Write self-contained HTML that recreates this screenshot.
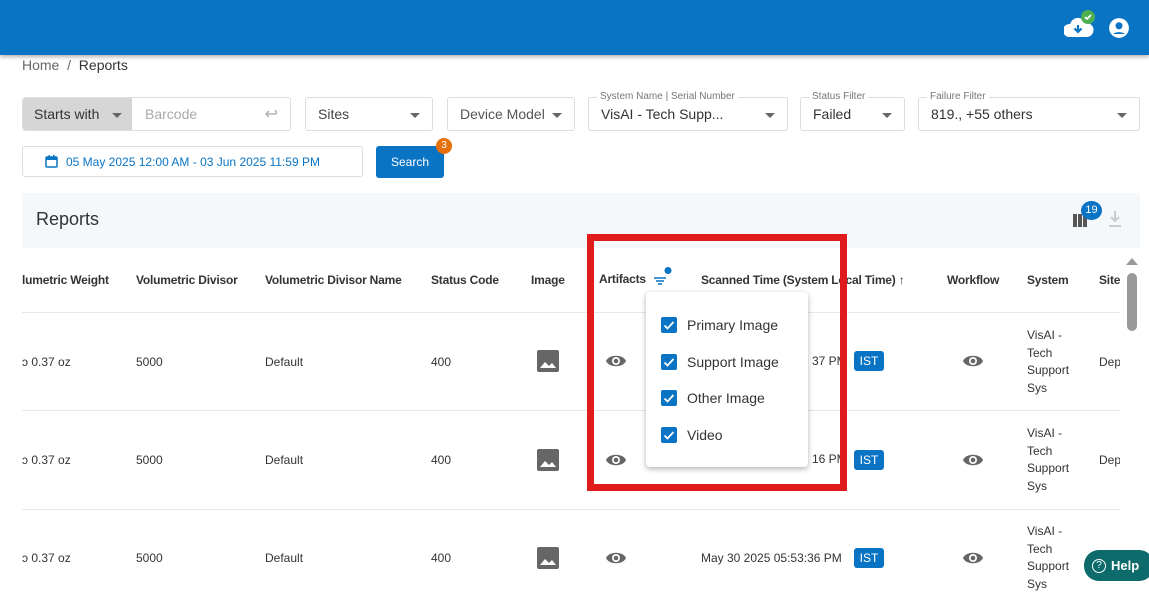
<!DOCTYPE html>
<html><head><meta charset="utf-8"><style>
*{box-sizing:border-box;margin:0;padding:0}
body{width:1149px;height:604px;overflow:hidden;background:#fff;font-family:"Liberation Sans",Arial,sans-serif;position:relative;color:#333}
.a{position:absolute}
.hdr{left:0;top:0;width:1149px;height:55px;background:#0a74c4;box-shadow:0 2px 4px rgba(0,0,0,.3)}
.box{position:absolute;border:1px solid #ddd;border-radius:3px;height:34px;background:#fff;font-size:14px;color:#444;display:flex;align-items:center;padding-left:12px}
.car{position:absolute;right:12px;top:15px;width:0;height:0;border-left:5px solid transparent;border-right:5px solid transparent;border-top:5px solid #666}
.lbl{position:absolute;top:-7px;left:8px;background:#fff;padding:0 3px;font-size:10px;color:#777;line-height:12px}
.th{position:absolute;top:273px;font-size:12px;font-weight:bold;color:#333;letter-spacing:-0.2px}
.td{position:absolute;font-size:12px;color:#333}
.sep{position:absolute;left:22px;width:1106px;height:1px;background:#e8e8e8}
.ist{position:absolute;width:30px;height:20px;background:#0a74c4;color:#fff;font-size:12px;border-radius:3px;text-align:center;line-height:20px}
.cb{position:absolute;left:661px;width:16px;height:16px;background:#0a74c4;border-radius:2px}
.cbt{position:absolute;left:687px;font-size:14px;color:#333}
</style></head><body>
<div class="a hdr"></div>
<svg class="a" style="left:1064px;top:9px" width="34" height="30" viewBox="0 0 34 30"><path d="M5 28a6.5 6.5 0 0 1 1-13a8.5 8.5 0 0 1 16-1a6.5 6.5 0 0 1 1 14z" fill="#fff"/><path d="M14 16v7m-3.5-3.5l3.5 3.5 3.5-3.5" stroke="#0a74c4" stroke-width="2.2" fill="none"/><circle cx="24" cy="8" r="7" fill="#4caf50"/><path d="M21 8l2 2 4-4" stroke="#fff" stroke-width="1.8" fill="none"/></svg>
<svg class="a" style="left:1108px;top:17px" width="22" height="22" viewBox="0 0 20 20"><circle cx="10" cy="10" r="9" fill="#fff"/><circle cx="10" cy="8" r="3.2" fill="#0a74c4"/><path d="M4.5 15.5a7 4.5 0 0 1 11 0" fill="#0a74c4"/></svg>
<div class="a" style="left:22px;top:57px;font-size:14px;color:#666">Home &nbsp;/ &nbsp;<span style="color:#333">Reports</span></div>

<div class="box" style="left:22px;top:97px;width:269px;padding:0"><div style="width:109px;height:100%;background:#d6d6d6;border-radius:3px 0 0 3px;display:flex;align-items:center;padding-left:11px;color:#333;position:relative">Starts with<div class="car" style="right:10px"></div></div><span style="color:#aaa;margin-left:13px">Barcode</span><span style="position:absolute;right:12px;color:#aaa;font-size:16px">↩</span></div>
<div class="box" style="left:305px;top:97px;width:128px">Sites<div class="car"></div></div>
<div class="box" style="left:447px;top:97px;width:128px;color:#555">Device Model<div class="car"></div></div>
<div class="box" style="left:588px;top:97px;width:200px;color:#333"><div class="lbl">System Name | Serial Number</div>VisAI - Tech Supp...<div class="car"></div></div>
<div class="box" style="left:800px;top:97px;width:105px;color:#333"><div class="lbl">Status Filter</div>Failed<div class="car"></div></div>
<div class="box" style="left:918px;top:97px;width:222px;color:#333"><div class="lbl">Failure Filter</div>819., +55 others<div class="car"></div></div>

<div class="box" style="left:22px;top:146px;width:341px;height:31px;font-size:12px;color:#0a74c4;padding-left:22px"><svg width="13" height="13" viewBox="0 0 13 13" style="margin-right:8px"><rect x="1" y="2" width="11" height="10" rx="1" fill="none" stroke="#0a74c4" stroke-width="1.5"/><rect x="1" y="2" width="11" height="3" fill="#0a74c4"/><rect x="3.5" y="0" width="1.5" height="3" fill="#0a74c4"/><rect x="8" y="0" width="1.5" height="3" fill="#0a74c4"/></svg>05 May 2025 12:00 AM - 03 Jun 2025 11:59 PM</div>
<div class="a" style="left:376px;top:146px;width:68px;height:32px;background:#0a74c4;border-radius:3px;color:#fff;font-size:12px;text-align:center;line-height:32px">Search</div>
<div class="a" style="left:436px;top:138px;width:16px;height:16px;border-radius:50%;background:#e8700a;color:#fff;font-size:10px;text-align:center;line-height:16px">3</div>

<div class="a" style="left:22px;top:193px;width:1118px;height:55px;background:#f5f8fb"></div>
<div class="a" style="left:36px;top:209px;font-size:18px;color:#333">Reports</div>
<svg class="a" style="left:1073px;top:211px" width="18" height="16"><rect x="0" y="3" width="4" height="13" fill="#555"/><rect x="5" y="3" width="4" height="13" fill="#555"/><rect x="10" y="3" width="4" height="13" fill="#555"/></svg>
<div class="a" style="left:1081px;top:201px;width:21px;height:19px;border-radius:50%;background:#0a74c4;color:#fff;font-size:11px;text-align:center;line-height:19px">19</div>
<svg class="a" style="left:1108px;top:210px" width="14" height="18"><path d="M7 1v10M3 7l4 4 4-4M1 16h12" stroke="#ccc" stroke-width="2" fill="none"/></svg>

<div class="th" style="left:22px">lumetric Weight</div>
<div class="th" style="left:136px">Volumetric Divisor</div>
<div class="th" style="left:265px">Volumetric Divisor Name</div>
<div class="th" style="left:431px">Status Code</div>
<div class="th" style="left:531px">Image</div>
<div class="th" style="left:599px;top:272px">Artifacts</div>
<svg class="a" style="left:652px;top:266px" width="22" height="20"><path d="M2 12h12M4 15h8M6 18h4" stroke="#0a74c4" stroke-width="1.5"/><circle cx="16" cy="4.5" r="3.5" fill="#0a74c4"/></svg>
<div class="th" style="left:701px">Scanned Time (System Local Time) <span style="font-weight:normal">↑</span></div>
<div class="th" style="left:947px">Workflow</div>
<div class="th" style="left:1027px">System</div>
<div class="th" style="left:1099px">Site</div>

<div class="sep" style="top:312px"></div>
<div class="sep" style="top:410px"></div>
<div class="sep" style="top:509px"></div>

<div class="td" style="left:22px;top:355px">ɔ 0.37 oz</div><div class="td" style="left:136px;top:355px">5000</div><div class="td" style="left:265px;top:355px">Default</div><div class="td" style="left:431px;top:355px">400</div>
<div class="td" style="left:22px;top:453px">ɔ 0.37 oz</div><div class="td" style="left:136px;top:453px">5000</div><div class="td" style="left:265px;top:453px">Default</div><div class="td" style="left:431px;top:453px">400</div>
<div class="td" style="left:22px;top:551px">ɔ 0.37 oz</div><div class="td" style="left:136px;top:551px">5000</div><div class="td" style="left:265px;top:551px">Default</div><div class="td" style="left:431px;top:551px">400</div>
<div class="td" style="left:701px;top:551px">May 30 2025 05:53:36 PM</div>
<div class="td" style="left:812px;top:354px">37 PM</div>
<div class="td" style="left:812px;top:452px">16 PM</div>

<svg width="0" height="0" style="position:absolute"><defs>
<g id="img"><rect width="22" height="22" rx="2" fill="#666"/><path d="M3 18l5-6 4 4 3-3 4 5z" fill="#fff"/></g>
<g id="eye"><path d="M1 8C4 1 18 1 21 8C18 15 4 15 1 8z" fill="#666"/><circle cx="11" cy="8" r="4" fill="#fff"/><circle cx="11" cy="8" r="2.3" fill="#666"/></g>
</defs></svg>
<svg class="a" style="left:537px;top:350px" width="22" height="22"><use href="#img"/></svg>
<svg class="a" style="left:537px;top:449px" width="22" height="22"><use href="#img"/></svg>
<svg class="a" style="left:537px;top:547px" width="22" height="22"><use href="#img"/></svg>
<svg class="a" style="left:605px;top:353px" width="22" height="16"><use href="#eye"/></svg>
<svg class="a" style="left:605px;top:452px" width="22" height="16"><use href="#eye"/></svg>
<svg class="a" style="left:605px;top:550px" width="22" height="16"><use href="#eye"/></svg>
<svg class="a" style="left:962px;top:353px" width="22" height="16"><use href="#eye"/></svg>
<svg class="a" style="left:962px;top:452px" width="22" height="16"><use href="#eye"/></svg>
<svg class="a" style="left:962px;top:550px" width="22" height="16"><use href="#eye"/></svg>
<div class="ist" style="left:854px;top:351px">IST</div>
<div class="ist" style="left:854px;top:450px">IST</div>
<div class="ist" style="left:854px;top:548px">IST</div>
<div class="td" style="left:1027px;top:327px;line-height:17.5px">VisAI -<br>Tech<br>Support<br>Sys</div>
<div class="td" style="left:1027px;top:425px;line-height:17.5px">VisAI -<br>Tech<br>Support<br>Sys</div>
<div class="td" style="left:1027px;top:523px;line-height:17.5px">VisAI -<br>Tech<br>Support<br>Sys</div>
<div class="td" style="left:1099px;top:355px">Depo</div>
<div class="td" style="left:1099px;top:453px">Depo</div>
<div class="a" style="left:1120px;top:310px;width:8px;height:220px;background:#fff"></div>
<div class="a" style="left:1122px;top:250px;width:27px;height:354px;background:#fff"></div>
<div class="a" style="left:1126px;top:258px;width:0;height:0;border-left:6px solid transparent;border-right:6px solid transparent;border-bottom:7px solid #999"></div>
<div class="a" style="left:1127px;top:273px;width:10px;height:58px;border-radius:5px;background:#999"></div>

<div class="a" style="left:587px;top:234px;width:260px;height:257px;border:7px solid #e01b1b"></div>
<div class="a" style="left:646px;top:292px;width:162px;height:175px;background:#fff;border-radius:4px;box-shadow:0 2px 6px rgba(0,0,0,.3)"></div>
<div class="cb" style="top:317px"></div><svg class="a" style="left:661px;top:317px" width="16" height="16"><path d="M3.5 8.5l3 3 6-6.5" stroke="#fff" stroke-width="1.8" fill="none"/></svg><div class="cbt" style="top:317px">Primary Image</div>
<div class="cb" style="top:354px"></div><svg class="a" style="left:661px;top:354px" width="16" height="16"><path d="M3.5 8.5l3 3 6-6.5" stroke="#fff" stroke-width="1.8" fill="none"/></svg><div class="cbt" style="top:354px">Support Image</div>
<div class="cb" style="top:390px"></div><svg class="a" style="left:661px;top:390px" width="16" height="16"><path d="M3.5 8.5l3 3 6-6.5" stroke="#fff" stroke-width="1.8" fill="none"/></svg><div class="cbt" style="top:390px">Other Image</div>
<div class="cb" style="top:427px"></div><svg class="a" style="left:661px;top:427px" width="16" height="16"><path d="M3.5 8.5l3 3 6-6.5" stroke="#fff" stroke-width="1.8" fill="none"/></svg><div class="cbt" style="top:427px">Video</div>

<div class="a" style="left:1084px;top:550px;width:70px;height:31px;border-radius:15px;background:#0d6b6b;color:#fff;font-size:13px;font-weight:bold;display:flex;align-items:center;padding-left:8px"><span style="display:inline-block;width:14px;height:14px;border:1.5px solid #fff;border-radius:50%;font-size:10px;line-height:11px;text-align:center;font-weight:normal;margin-right:5px">?</span>Help</div>
</body></html>
